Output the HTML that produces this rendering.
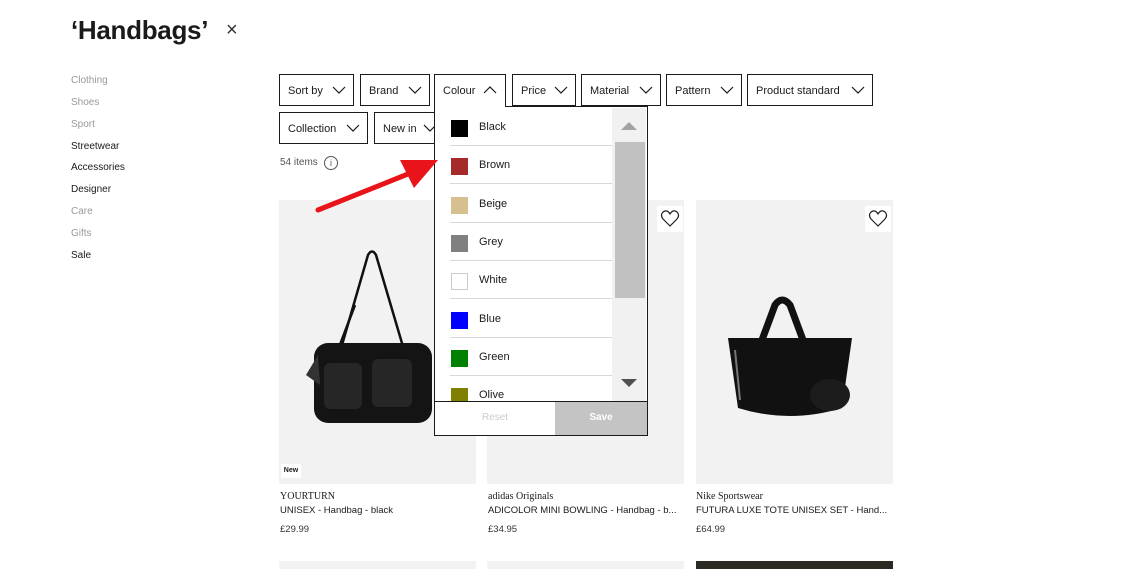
<!DOCTYPE html>
<html><head><meta charset="utf-8"><style>
*{box-sizing:border-box;margin:0;padding:0}
body{width:1137px;height:569px;overflow:hidden;background:#fff;font-family:"Liberation Sans",Arial,sans-serif;color:#1a1a1a;position:relative}
.a{position:absolute}
h1{position:absolute;left:71px;top:15px;font-size:26px;font-weight:bold;letter-spacing:-0.3px}
.side div{position:absolute;left:71px;font-size:10px}
.g{color:#999}.b{color:#1a1a1a}
.btn{position:absolute;height:32px;border:1px solid #1a1a1a;font-size:11px;padding-left:8px;line-height:32px;background:#fff}
.btn svg{position:absolute;right:7px;top:11px}
.card{position:absolute;top:200px;width:197px;height:284px;background:#f2f2f2}
.brand{position:absolute;top:491px;font-family:"Liberation Serif",serif;font-size:10px}
.nm{position:absolute;top:505px;font-size:9.5px;white-space:nowrap}
.pr{position:absolute;top:524px;font-size:9.5px;color:#333}
.heart{position:absolute;top:206px;width:26px;height:26px;background:#fff}
.row{position:absolute;left:450px;width:162px;height:38px;border-bottom:1px solid #d8d8d8;font-size:11px}
.row i{position:absolute;left:1px;top:12px;width:17px;height:17px}
.row span{position:absolute;left:29px;top:13px}
</style></head><body>
<h1>‘Handbags’</h1>
<div class="a" style="left:226px;top:19px;font-size:20px;color:#333;font-weight:300">×</div>
<div class="side">
<div class="g" style="top:75px">Clothing</div>
<div class="g" style="top:97px">Shoes</div>
<div class="g" style="top:119px">Sport</div>
<div class="b" style="top:141px">Streetwear</div>
<div class="b" style="top:162px">Accessories</div>
<div class="b" style="top:184px">Designer</div>
<div class="g" style="top:206px">Care</div>
<div class="g" style="top:228px">Gifts</div>
<div class="b" style="top:250px">Sale</div>
</div>

<div class="btn" style="left:279px;top:74px;width:75px">Sort by<svg width="14" height="9"><path d="M1 1l6 6 6-6" stroke="#1a1a1a" fill="none" stroke-width="1.2"/></svg></div>
<div class="btn" style="left:360px;top:74px;width:70px">Brand<svg width="14" height="9"><path d="M1 1l6 6 6-6" stroke="#1a1a1a" fill="none" stroke-width="1.2"/></svg></div>
<div class="btn" style="left:512px;top:74px;width:64px">Price<svg width="14" height="9"><path d="M1 1l6 6 6-6" stroke="#1a1a1a" fill="none" stroke-width="1.2"/></svg></div>
<div class="btn" style="left:581px;top:74px;width:80px">Material<svg width="14" height="9"><path d="M1 1l6 6 6-6" stroke="#1a1a1a" fill="none" stroke-width="1.2"/></svg></div>
<div class="btn" style="left:666px;top:74px;width:76px">Pattern<svg width="14" height="9"><path d="M1 1l6 6 6-6" stroke="#1a1a1a" fill="none" stroke-width="1.2"/></svg></div>
<div class="btn" style="left:747px;top:74px;width:126px">Product standard<svg width="14" height="9"><path d="M1 1l6 6 6-6" stroke="#1a1a1a" fill="none" stroke-width="1.2"/></svg></div>
<div class="btn" style="left:279px;top:112px;width:89px">Collection<svg width="14" height="9"><path d="M1 1l6 6 6-6" stroke="#1a1a1a" fill="none" stroke-width="1.2"/></svg></div>
<div class="btn" style="left:374px;top:112px;width:80px">New in<svg width="14" height="9" style="right:16px"><path d="M1 1l6 6 6-6" stroke="#1a1a1a" fill="none" stroke-width="1.2"/></svg></div>

<div class="a" style="left:280px;top:157px;font-size:10px;color:#555">54 items</div>
<div class="a" style="left:324px;top:156px;width:14px;height:14px;border:1px solid #555;border-radius:50%;font-size:9px;text-align:center;line-height:12px;color:#555">i</div>

<div class="card" style="left:279px"></div>
<div class="card" style="left:487px"></div>
<div class="card" style="left:696px"></div>
<div class="a" style="left:279px;top:561px;width:197px;height:8px;background:#f2f2f2"></div>
<div class="a" style="left:487px;top:561px;width:197px;height:8px;background:#f2f2f2"></div>
<div class="a" style="left:696px;top:561px;width:197px;height:8px;background:#2a2a22"></div>

<svg class="a" style="left:300px;top:245px" width="150" height="190" viewBox="0 0 150 190">
<path d="M42 100 L68 10 Q72 3 76 10 L104 105" stroke="#111" stroke-width="2.5" fill="none"/>
<path d="M55 60 L38 105" stroke="#111" stroke-width="2.5" fill="none"/>
<rect x="14" y="98" width="118" height="80" rx="14" fill="#141414"/>
<rect x="24" y="118" width="38" height="46" rx="6" fill="#262626"/>
<rect x="72" y="114" width="40" height="48" rx="6" fill="#262626"/>
<path d="M6 130 L18 110 L20 140 Z" fill="#333"/>
</svg>
<div class="a" style="left:281px;top:464px;width:20px;height:14px;background:#fff;font-size:7px;font-weight:bold;line-height:14px;text-align:center">New</div>

<svg class="a" style="left:720px;top:290px" width="140" height="140" viewBox="0 0 140 140">
<path d="M42 50 L55 15 Q62 5 70 15 L83 50" stroke="#111" stroke-width="7" fill="none"/>
<path d="M8 48 L132 48 L122 118 Q70 134 18 118 Z" fill="#111"/>
<path d="M15 60 L20 110" stroke="#777" stroke-width="2"/>
<ellipse cx="110" cy="105" rx="20" ry="16" fill="#1c1c1c"/>
</svg>

<div class="heart" style="left:657px"><svg width="26" height="26"><path d="M13 20 L6 13 Q3 9 6 6 Q10 3 13 8 Q16 3 20 6 Q23 9 20 13 Z" stroke="#222" fill="none" stroke-width="1.2"/></svg></div>
<div class="heart" style="left:865px"><svg width="26" height="26"><path d="M13 20 L6 13 Q3 9 6 6 Q10 3 13 8 Q16 3 20 6 Q23 9 20 13 Z" stroke="#222" fill="none" stroke-width="1.2"/></svg></div>

<div class="brand" style="left:280px">YOURTURN</div>
<div class="nm" style="left:280px">UNISEX - Handbag - black</div>
<div class="pr" style="left:280px">£29.99</div>
<div class="brand" style="left:488px">adidas Originals</div>
<div class="nm" style="left:488px">ADICOLOR MINI BOWLING - Handbag - b...</div>
<div class="pr" style="left:488px">£34.95</div>
<div class="brand" style="left:696px">Nike Sportswear</div>
<div class="nm" style="left:696px">FUTURA LUXE TOTE UNISEX SET - Hand...</div>
<div class="pr" style="left:696px">£64.99</div>

<div class="a" style="left:434px;top:74px;width:72px;height:34px;border:1px solid #1a1a1a;border-bottom:none;background:#fff;font-size:11px;padding-left:8px;line-height:32px">Colour<svg style="position:absolute;right:8px;top:10px" width="14" height="9"><path d="M1 8l6-6 6 6" stroke="#1a1a1a" fill="none" stroke-width="1.2"/></svg></div>
<div class="a" style="left:434px;top:107px;width:214px;height:329px;border:1px solid #1a1a1a;border-top:none;background:#fff;overflow:hidden"></div>
<div class="a" style="left:505px;top:106px;width:143px;height:1px;background:#1a1a1a"></div>
<div class="row" style="top:108px"><i style="background:#000"></i><span>Black</span></div>
<div class="row" style="top:146px"><i style="background:#a52a2a"></i><span>Brown</span></div>
<div class="row" style="top:185px"><i style="background:#d6c08f"></i><span>Beige</span></div>
<div class="row" style="top:223px"><i style="background:#808080"></i><span>Grey</span></div>
<div class="row" style="top:261px"><i style="background:#fff;border:1px solid #ccc"></i><span>White</span></div>
<div class="row" style="top:300px"><i style="background:#0000ff"></i><span>Blue</span></div>
<div class="row" style="top:338px"><i style="background:#008000"></i><span>Green</span></div>
<div class="row" style="top:376px;height:25px;overflow:hidden;border:none"><i style="background:#808000"></i><span>Olive</span></div>
<div class="a" style="left:612px;top:108px;width:34px;height:293px;background:#f1f1f1"></div>
<div class="a" style="left:615px;top:142px;width:30px;height:156px;background:#c1c1c1"></div>
<svg class="a" style="left:621px;top:121px" width="16" height="10"><path d="M0 9 L8 1 L16 9Z" fill="#a3a3a3"/></svg>
<svg class="a" style="left:621px;top:378px" width="16" height="10"><path d="M0 1 L8 9 L16 1Z" fill="#505050"/></svg>
<div class="a" style="left:435px;top:401px;width:212px;height:1px;background:#1a1a1a"></div>
<div class="a" style="left:435px;top:402px;width:120px;height:33px;font-size:10px;color:#ccc;text-align:center;line-height:32px">Reset</div>
<div class="a" style="left:555px;top:402px;width:92px;height:33px;background:#c4c4c4;font-size:10px;color:#fff;font-weight:bold;text-align:center;line-height:32px">Save</div>

<svg class="a" style="left:310px;top:150px" width="135" height="70"><path d="M8 60 L98 24" stroke="#e8141a" stroke-width="5" stroke-linecap="round"/><path d="M128 10 L90 10 L104 38 Z" fill="#e8141a"/></svg>
</body></html>
